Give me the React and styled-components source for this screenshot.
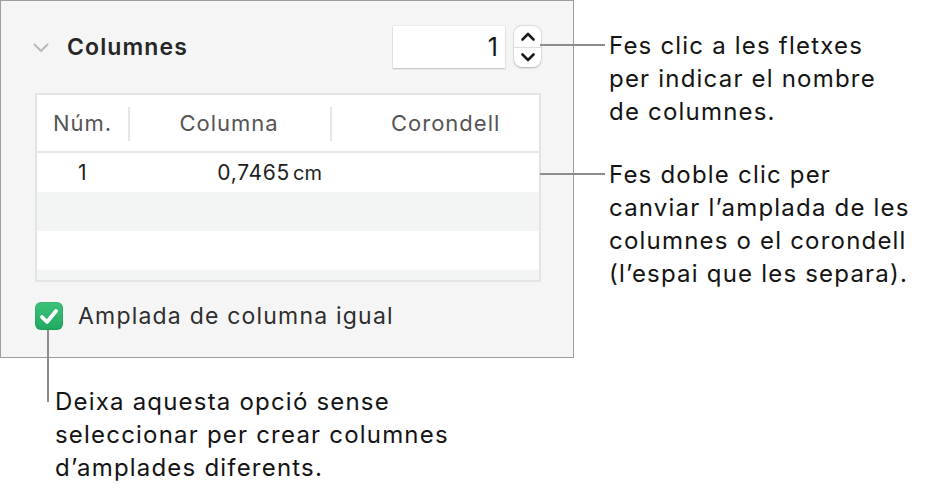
import React from "react";
import styled, { createGlobalStyle } from "styled-components";

const GlobalStyle = createGlobalStyle`
  html, body {
    margin: 0;
    padding: 0;
    background: #ffffff;
  }
  body {
    font-family: Inter, "Liberation Sans", sans-serif;
    -webkit-font-smoothing: antialiased;
  }
`;

const Page = styled.div`
  position: relative;
  width: 928px;
  height: 497px;
  display: grid;
  grid-template-columns: 574px 1fr;
  grid-template-rows: 358px 1fr;
  overflow: hidden;
`;

const Panel = styled.section`
  grid-column: 1;
  grid-row: 1;
  box-sizing: border-box;
  background: #f5f5f5;
  border: 1px solid #9d9d9d;
  padding: 24px 32px 0 34px;
  display: flex;
  flex-direction: column;
`;

const HeaderRow = styled.div`
  display: flex;
  align-items: center;
  height: 43px;
`;

const Disclosure = styled.svg`
  width: 16px;
  height: 10px;
  margin-left: -2px;
  margin-right: 18px;
  margin-top: 2px;
`;

const Title = styled.h2`
  margin: 0;
  font-size: 23px;
  letter-spacing: 1.1px;
  font-weight: 600;
  color: #262626;
  flex: 1;
`;

const NumberField = styled.div`
  box-sizing: border-box;
  width: 112px;
  height: 42px;
  background: #fff;
  box-shadow: 0 1px 1.5px rgba(0, 0, 0, 0.22), 0 0 0 0.5px rgba(0, 0, 0, 0.06);
  display: flex;
  align-items: center;
  justify-content: flex-end;
  padding-right: 7px;
  font-size: 25px;
  color: #161616;
`;

const Stepper = styled.div`
  width: 27px;
  height: 41px;
  margin-left: 9px;
  border-radius: 8px;
  background: #fff;
  box-shadow: 0 0.5px 2px rgba(0, 0, 0, 0.25), 0 0 0 0.5px rgba(0, 0, 0, 0.08);
  display: grid;
  grid-template-rows: 1fr 1fr;
  overflow: hidden;
`;

const StepHalf = styled.div`
  display: flex;
  align-items: center;
  justify-content: center;
  border-top: ${(p) => (p.$lower ? "1px solid #dedede" : "none")};
`;

const Table = styled.div`
  margin-top: 25px;
  height: 189px;
  box-sizing: border-box;
  border: 2px solid #e4e4e4;
  background: #fff;
  overflow: hidden;
`;

const Cols = styled.div`
  display: grid;
  grid-template-columns: 91px 202px 1fr;
  height: ${(p) => p.$h}px;
  background: ${(p) => (p.$alt ? "#f3f4f4" : "#ffffff")};
  border-bottom: ${(p) => (p.$head ? "2px solid #e6e6e6" : "none")};
  box-sizing: border-box;
`;

const HeadCell = styled.div`
  position: relative;
  display: flex;
  align-items: center;
  justify-content: ${(p) => p.$justify || "center"};
  padding: 0 ${(p) => p.$pad || 0}px;
  font-size: 22px;
  letter-spacing: 1px;
  color: #555;
  &::before {
    content: "";
    display: ${(p) => (p.$divider ? "block" : "none")};
    position: absolute;
    left: 0;
    top: 12px;
    bottom: 10px;
    width: 2px;
    background: #e6e6e6;
  }
`;

const Cell = styled.div`
  display: flex;
  align-items: center;
  justify-content: ${(p) => p.$justify || "center"};
  padding: 0 ${(p) => p.$pad || 0}px;
  font-size: 21px;
  letter-spacing: 0.7px;
  color: #1e1e1e;
`;

const Unit = styled.span`
  margin-left: 3px;
  font-size: 20px;
  letter-spacing: 0;
`;

const CheckRow = styled.label`
  display: flex;
  align-items: center;
  margin-top: 20px;
  height: 28px;
  gap: 15px;
  font-size: 23px;
  letter-spacing: 1.2px;
  color: #2e2e2e;
`;

const CheckBox = styled.span`
  width: 28px;
  height: 28px;
  border-radius: 6px;
  background: linear-gradient(#3fc27c, #1fa95d);
  box-shadow: inset 0 0 0 1px rgba(0, 0, 0, 0.08);
  display: flex;
  align-items: center;
  justify-content: center;
`;

const SideNotes = styled.div`
  grid-column: 2;
  grid-row: 1 / span 2;
  padding: 29px 0 0 35px;
  display: flex;
  flex-direction: column;
  gap: 30px;
`;

const BottomNote = styled.div`
  grid-column: 1;
  grid-row: 2;
  padding: 27px 0 0 55px;
`;

const Note = styled.p`
  position: relative;
  margin: 0;
  font-size: 24px;
  letter-spacing: 1.2px;
  line-height: 33px;
  color: #141414;
  white-space: nowrap;
  &::before {
    content: "";
    position: absolute;
    background: #8c8c8c;
    ${(p) =>
      p.$vertical
        ? "left: -8px; top: -55px; width: 2px; height: 72px;"
        : "left: -69px; top: 15px; width: 65px; height: 2px;"}
  }
`;

const Chevron = ({ up }) => (
  <svg width="14" height="9" viewBox="0 0 14 9">
    <path
      d={up ? "M1.5 7.5 L7 2 L12.5 7.5" : "M1.5 1.5 L7 7 L12.5 1.5"}
      fill="none"
      stroke="#1c1c1c"
      strokeWidth="2.6"
      strokeLinecap="round"
      strokeLinejoin="round"
    />
  </svg>
);

const rows = [
  { h: 39, alt: false, num: "1", width: "0,7465", gutter: "" },
  { h: 39, alt: true },
  { h: 39, alt: false },
  { h: 39, alt: true },
];

export default function App() {
  return (
    <>
      <GlobalStyle />
      <Page>
        <Panel>
          <HeaderRow>
            <Disclosure viewBox="0 0 16 10">
              <path
                d="M1.5 1.5 L8 8 L14.5 1.5"
                fill="none"
                stroke="#b9b9b9"
                strokeWidth="2"
                strokeLinecap="round"
                strokeLinejoin="round"
              />
            </Disclosure>
            <Title>Columnes</Title>
            <NumberField>1</NumberField>
            <Stepper>
              <StepHalf>
                <Chevron up />
              </StepHalf>
              <StepHalf $lower>
                <Chevron />
              </StepHalf>
            </Stepper>
          </HeaderRow>

          <Table>
            <Cols $h={58} $head>
              <HeadCell>Núm.</HeadCell>
              <HeadCell $divider>Columna</HeadCell>
              <HeadCell $divider $justify="flex-start" $pad={61}>
                Corondell
              </HeadCell>
            </Cols>
            {rows.map((r, i) => (
              <Cols key={i} $h={r.h} $alt={r.alt}>
                <Cell>{r.num}</Cell>
                <Cell $justify="flex-end" $pad={8}>
                  {r.width && (
                    <>
                      {r.width}
                      <Unit>cm</Unit>
                    </>
                  )}
                </Cell>
                <Cell>{r.gutter}</Cell>
              </Cols>
            ))}
          </Table>

          <CheckRow>
            <CheckBox>
              <svg width="20" height="17" viewBox="0 0 20 17">
                <path
                  d="M3 9 L8 14 L17 3"
                  fill="none"
                  stroke="#fff"
                  strokeWidth="3.8"
                  strokeLinecap="round"
                  strokeLinejoin="round"
                />
              </svg>
            </CheckBox>
            Amplada de columna igual
          </CheckRow>
        </Panel>

        <SideNotes>
          <Note>
            Fes clic a les fletxes
            <br />
            per indicar el nombre
            <br />
            de columnes.
          </Note>
          <Note>
            Fes doble clic per
            <br />
            canviar l’amplada de les
            <br />
            columnes o el corondell
            <br />
            (l’espai que les separa).
          </Note>
        </SideNotes>

        <BottomNote>
          <Note $vertical>
            Deixa aquesta opció sense
            <br />
            seleccionar per crear columnes
            <br />
            d’amplades diferents.
          </Note>
        </BottomNote>
      </Page>
    </>
  );
}
